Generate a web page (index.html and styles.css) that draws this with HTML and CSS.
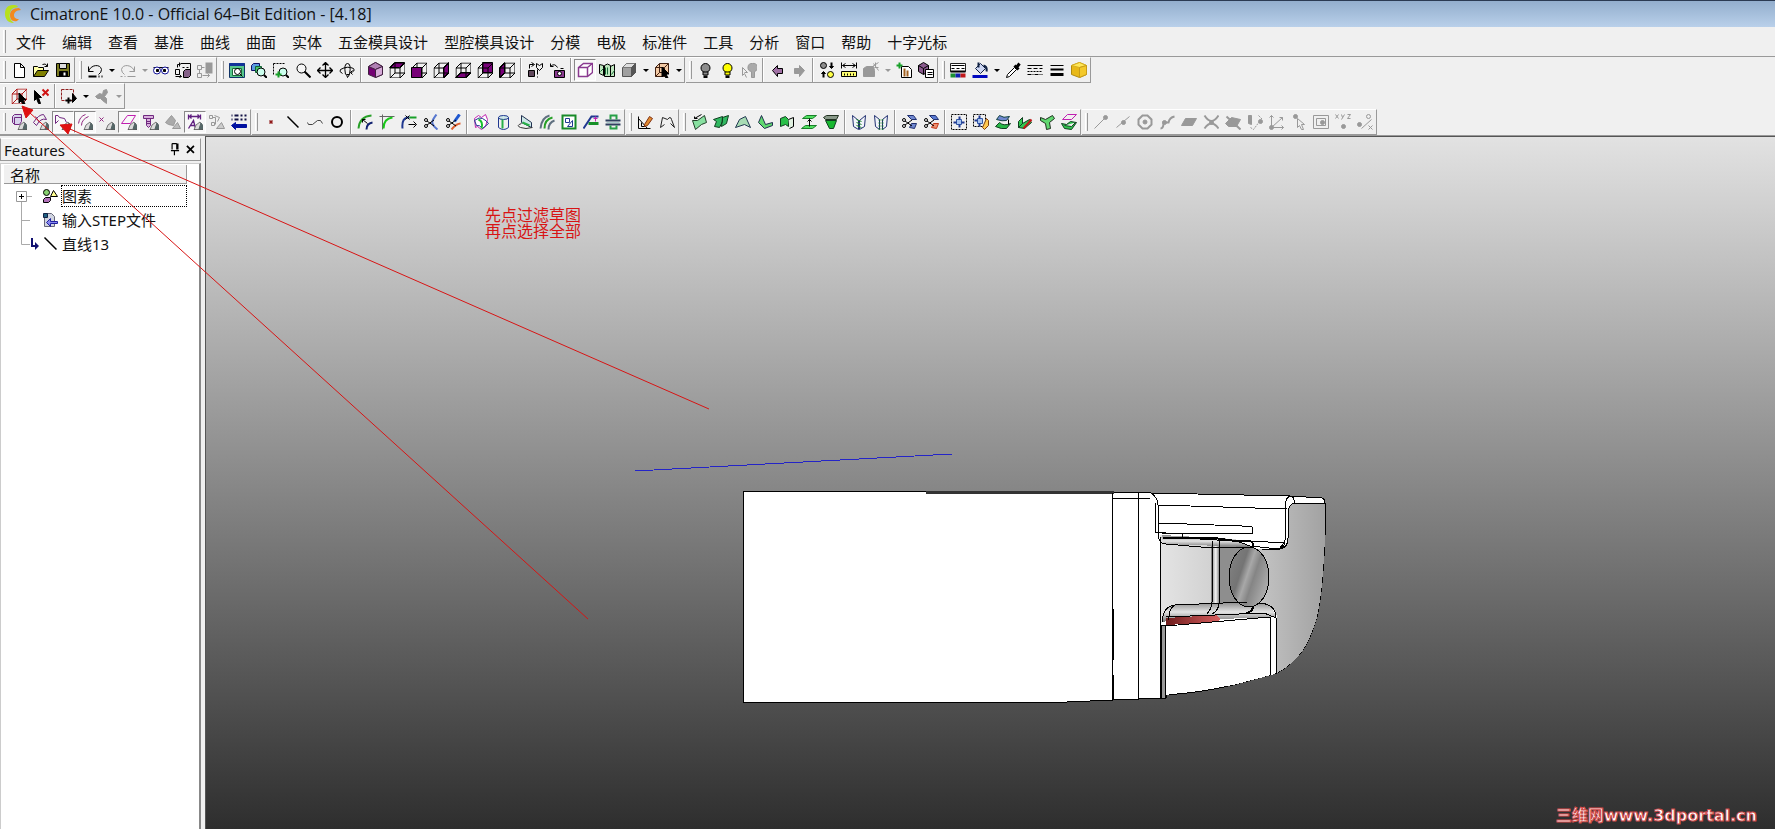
FILE: index.html
```html
<!DOCTYPE html>
<html lang="zh-CN">
<head>
    <meta charset="UTF-8">
    <meta name="viewport" content="width=device-width, initial-scale=1.0">
    <title>CimatronE 10.0</title>
    <link rel="stylesheet" href="styles.css">
</head>
<body>

<!-- shared icon parts -->
<svg class="defs" aria-hidden="true">
    <symbol id="wire" viewBox="-.5 -.5 16 16"><path d="M0 5h10v10H0zM5 0h10v10H5zM0 5l5-5M10 5l5-5M0 15l5-5M10 15l5-5"/></symbol>
    <symbol id="cone" viewBox="-.5 -.5 16 16"><path d="M6 15L8 10L12 7L15 11V15Z" fill="#dcdcdc" stroke="#777"/><path d="M11 14L13 8L15 11V14Z" fill="#566" stroke="#566"/><path d="M6 15H15" stroke="#333"/></symbol>
    <symbol id="pick" viewBox="-.5 -.5 16 16"><path d="M7 4V14L9 12L11 15L13 15L11 11H14Z" fill="#000"/></symbol>
    <symbol id="lens" viewBox="-.5 -.5 16 16"><circle cx="9" cy="9" r="4" fill="#cfe" /><path d="M12 12l3 3" stroke-width="2"/></symbol>
    <symbol id="scis" viewBox="-.5 -.5 16 16"><circle cx="2" cy="5" r="1.5"/><circle cx="2" cy="11" r="1.5"/><path d="M3 6L10 11M3 10L10 5"/></symbol>
    <symbol id="bulb" viewBox="-.5 -.5 16 16"><circle cx="7.500" cy="5" r="4.500"/><path d="M5 9H10V12H5Z"/><path d="M6 13H9V15H6Z" fill="#111"/></symbol>
</svg>

<div class="app">
    <header class="titlebar">
        <svg class="logo" viewBox="0 0 18 20"><path d="M9 1C3 1 1 5 1 10s3 9 9 9c-4-3-5-6-4-10s2-5 8-6C13 1 11 1 9 1z" fill="#b7e01c"/><path d="M15 4C9 4 6 7 6 11s2 7 7 6l2-2c-4 0-5-2-5-4s2-5 7-5z" fill="#f28a1e"/></svg>
        <span>CimatronE 10.0 - Official 64–Bit Edition - [4.18]</span>
    </header>

    <nav class="menubar">
        <span class="grip"></span>
        <button>文件</button><button>编辑</button><button>查看</button><button>基准</button><button>曲线</button><button>曲面</button><button>实体</button><button>五金模具设计</button><button>型腔模具设计</button><button>分模</button><button>电极</button><button>标准件</button><button>工具</button><button>分析</button><button>窗口</button><button>帮助</button><button>十字光标</button>
    </nav>

    <div class="dock">
        <!-- file -->
        <div class="toolbar">
            <span class="grip"></span>
            <button aria-label="新建"><svg viewBox="-.5 -.5 16 16"><path d="M3 1H9L13 5V15H3ZM9 1V5H13" fill="#fff"/></svg></button>
            <button aria-label="打开"><svg viewBox="-.5 -.5 16 16"><path d="M0 14V4H4L5 5H10V8" fill="#ffffa8"/><path d="M0 14L4 8H15L11 14Z" fill="#808000"/><path d="M9 2Q12 0 14 4M14 1V4H11"/></svg></button>
            <button aria-label="保存"><svg viewBox="-.5 -.5 16 16"><path d="M1 1H14V14H1Z" fill="#7a7a20"/><path d="M4 1H11V6H4Z" fill="#ddd"/><path d="M4 9H12V14H4Z" fill="#000"/><path d="M9 10V13" stroke="#fff" stroke-width="2"/></svg></button>
        </div>
        <!-- edit -->
        <div class="toolbar">
            <span class="grip"></span>
            <button aria-label="撤销"><svg viewBox="-.5 -.5 16 16"><path d="M1 4V9H6M1 9C3 2 13 1 14 7Q14 10 11 12"/><path d="M1 14H9M11 14H12M14 14H15" stroke-width="2"/></svg></button>
            <button class="arrow" aria-label="撤销列表"></button>
            <button class="off" aria-label="重做"><svg viewBox="-.5 -.5 16 16"><path d="M14 4V9H9M14 9C12 2 2 1 1 7Q1 10 4 12M0 14H2M4 14H5M7 14H15"/></svg></button>
            <button class="arrow off" aria-label="重做列表"></button>
            <button aria-label="查找"><svg viewBox="-.5 -.5 16 16"><path d="M0 5H15"/><circle cx="3.500" cy="8" r="3.500" fill="#fff" stroke="#119"/><circle cx="11.500" cy="8" r="3.500" fill="#fff" stroke="#119"/><path d="M3 7H5V9H3ZM10 7H12V9H10Z" fill="#000"/></svg></button>
            <button aria-label="替换"><svg viewBox="-.5 -.5 16 16"><path d="M5 1H15V9M0 7H4V12H0ZM2 5V2H5M4 0V4M0 14H6M4 12L6 14L4 15M7 5H9M11 5H13"/><path d="M8 9L10 7H15V13L13 15H8Z" fill="#846088"/></svg></button>
            <button class="off" aria-label="删除"><svg viewBox="-.5 -.5 16 16"><path d="M0 3H4V7H0ZM0 11H4V15H0ZM2 7V11M4 5H7M5 13H12M10 11L12 13L10 15"/><path d="M8 1H15M9 3H14V10H9Z" fill="#999" stroke-width="2"/></svg></button>
        </div>
        <!-- view -->
        <div class="toolbar">
            <span class="grip"></span>
            <button aria-label="全部显示"><svg viewBox="-.5 -.5 16 16"><path d="M0 1H15V15H0Z" fill="#57c78c" stroke="#136"/><path d="M0 2H15" stroke="#139" stroke-width="3"/><path d="M3 6H12V13H3Z" fill="#fff" stroke="#196b39"/><circle cx="8" cy="9" r="3"/><path d="M10 11L13 14"/></svg></button>
            <button aria-label="缩放选择"><svg viewBox="-.5 -.5 16 16"><path d="M0 3L2 1H8V6L6 8H0Z" fill="#5b9be2" stroke="#116"/><path d="M4 4H10V10H4Z" fill="#46c46c" stroke="#163"/><use href="#lens"/></svg></button>
            <button aria-label="窗口缩放"><svg viewBox="-.5 -.5 16 16"><path d="M0 1H12M0 1V12" stroke-dasharray="2 1"/><use href="#lens"/><path d="M5 9V15M2 12H8" stroke="#18a028" stroke-width="2"/></svg></button>
            <button aria-label="缩放"><svg viewBox="-.5 -.5 16 16"><circle cx="6" cy="6" r="4.500" fill="#f6f6f6"/><path d="M9 9L15 15" stroke-width="2"/></svg></button>
            <button aria-label="平移"><svg viewBox="-.5 -.5 16 16"><path d="M0 8H15M8 0V15M5 3L8 0L11 3M5 12L8 15L11 12M3 5L0 8L3 11M12 5L15 8L12 11" stroke-width="1.300"/></svg></button>
            <button aria-label="旋转"><svg viewBox="-.5 -.5 16 16"><path d="M6 12Q4 1 8 1Q12 1 10 12M8 15L7 12H10ZM3 11Q-1 9 1 7Q8 3 14 6Q16 9 11 10L13 8M11 10L13 12"/></svg></button>
            <span class="sep"></span>
            <button aria-label="轴测"><svg viewBox="-.5 -.5 16 16"><path d="M1 4L8 0L15 4V12L8 15L1 12Z" fill="#730073" stroke="#402040"/><path d="M1 4L8 0L15 4L8 7Z" fill="#b080b4" stroke="#402040"/><path d="M8 7L15 4V12L8 15Z" fill="#d6aad8" stroke="#402040"/></svg></button>
            <button aria-label="俯视"><svg viewBox="-.5 -.5 16 16"><path d="M0 5L5 0H15L10 5Z" fill="#780078"/><use href="#wire"/></svg></button>
            <button aria-label="前视"><svg viewBox="-.5 -.5 16 16"><use href="#wire"/><path d="M0 5H10V15H0Z" fill="#780078"/></svg></button>
            <button aria-label="右视"><svg viewBox="-.5 -.5 16 16"><path d="M10 5L15 0V10L10 15Z" fill="#780078"/><use href="#wire"/></svg></button>
            <button aria-label="仰视"><svg viewBox="-.5 -.5 16 16"><path d="M0 15L5 10H15L10 15Z" fill="#780078"/><use href="#wire"/></svg></button>
            <button aria-label="后视"><svg viewBox="-.5 -.5 16 16"><path d="M5 0H15V10H5Z" fill="#780078"/><use href="#wire"/></svg></button>
            <button aria-label="左视"><svg viewBox="-.5 -.5 16 16"><path d="M0 5L5 0V10L0 15Z" fill="#780078"/><use href="#wire"/></svg></button>
            <span class="sep"></span>
            <button aria-label="锁定视图"><svg viewBox="-.5 -.5 16 16"><path d="M1 8H7V14H1Z" fill="#60485c"/><path d="M2 6V2H6M4 0L7 2L4 4M9 1L12 3L15 1V5L12 8L9 5ZM10 7V12M10 14V15"/></svg></button>
            <button aria-label="拍照"><svg viewBox="-.5 -.5 16 16"><path d="M5 8H15V15H5Z" fill="#8a3a90"/><circle cx="10" cy="11" r="2" fill="#fff"/><path d="M1 1V4H4M1 4Q5 0 8 5M11 6H14"/></svg></button>
            <span class="sep"></span>
            <button class="on" aria-label="线框"><svg viewBox="-.5 -.5 16 16"><path d="M1 5L6 1H15V10L10 14H1ZM1 5H10V14M10 5L15 1" fill="#fff" stroke="#8a3a90" stroke-width="1.500"/></svg></button>
            <button aria-label="隐藏线"><svg viewBox="-.5 -.5 16 16"><path d="M0 2L4 3V13L0 11ZM5 3Q8 0 11 3V14H5ZM11 4L15 2V14H11Z" fill="#bfe8bf"/><path d="M1 9L4 6M6 12V5M8 12V5M12 12L15 8" stroke="#196b39"/></svg></button>
            <button aria-label="着色"><svg viewBox="-.5 -.5 16 16"><path d="M1 5L5 1H14V10L10 14H1Z" fill="#a0a0a0" stroke="#555"/><path d="M1 5L5 1H14L10 5Z" fill="#ddd" stroke="#777"/><path d="M10 5L14 1V10L10 14Z" fill="#555" stroke="#555"/></svg></button>
            <button class="arrow" aria-label="着色列表"></button>
            <button aria-label="选择显示"><svg viewBox="-.5 -.5 16 16"><path d="M1 5L5 1H14V10L10 14H1Z" fill="#f2c9a4" stroke="#402010"/><path d="M1 5H10V14M10 5L14 1M5 1V10H14M5 10L1 14" stroke="#402010"/><use href="#pick"/></svg></button>
            <button class="arrow" aria-label="显示列表"></button>
        </div>
        <!-- hide / show -->
        <div class="toolbar">
            <span class="grip"></span>
            <button aria-label="隐藏"><svg viewBox="-.5 -.5 16 16"><g fill="#8c8c8c"><use href="#bulb"/></g></svg></button>
            <button aria-label="显示"><svg viewBox="-.5 -.5 16 16"><g fill="#ff0"><use href="#bulb"/></g></svg></button>
            <button class="off" aria-label="切换显示"><svg viewBox="-.5 -.5 16 16"><path d="M1 5V13L3 11L5 15M1 5L6 10H3"/><path d="M11 1a4 4 0 0 1 2 8V15H10V9A4 4 0 0 1 11 1Z" fill="#aaa"/></svg></button>
            <span class="sep"></span>
            <button aria-label="后退"><svg viewBox="-.5 -.5 16 16"><path d="M3 8L8 3V6H13V11H8V14Z" fill="#a070a4"/></svg></button>
            <button class="off" aria-label="前进"><svg viewBox="-.5 -.5 16 16"><path d="M13 8L8 3V6H3V11H8V14Z" fill="#999"/></svg></button>
            <span class="sep"></span>
            <button aria-label="交换"><svg viewBox="-.5 -.5 16 16"><circle cx="4" cy="3" r="3" fill="#8c8c8c"/><circle cx="11" cy="12" r="3" fill="#ff4"/><path d="M12 0V4M4 15V11" stroke-width="2"/><path d="M10 4H14L12 6ZM2 11H6L4 9Z" fill="#000"/></svg></button>
            <button aria-label="测量"><svg viewBox="-.5 -.5 16 16"><path d="M0 0V6M15 0V6M1 3H14M4 1L1 3L4 5M11 1L14 3L11 5"/><path d="M0 9H15V14H0Z" fill="#ffff70"/><path d="M3 11V13M6 11V13M9 11V13M12 11V13"/></svg></button>
            <button class="off" aria-label="爆炸"><svg viewBox="-.5 -.5 16 16"><path d="M0 6L3 4H10L11 8V14H0Z" fill="#999"/><path d="M9 4L15 0M11 5H15M10 1L15 8M12 0V4" /></svg></button>
            <button class="arrow off" aria-label="爆炸列表"></button>
            <button aria-label="添加工具"><svg viewBox="-.5 -.5 16 16"><path d="M5 4H12L15 7V15H5Z" fill="#fff"/><path d="M8 6V14M11 8V14" stroke="#a06020" stroke-width="2"/><path d="M3 0V6M0 3H6" stroke="#18a028" stroke-width="2"/></svg></button>
            <button aria-label="属性"><svg viewBox="-.5 -.5 16 16"><path d="M0 3L5 0L10 3V9L5 12L0 9Z" fill="#8a5a8e"/><path d="M0 3L5 6L10 3M5 6V12"/><path d="M7 7H15V15H7Z" fill="#fff"/><path d="M9 10H14M9 12H14"/></svg></button>
        </div>
        <!-- attributes -->
        <div class="toolbar">
            <span class="grip"></span>
            <button aria-label="层"><svg viewBox="-.5 -.5 16 16"><path d="M0 1H15V9H0Z" fill="#fff" stroke="#222"/><path d="M1 3H14M1 6H4M6 6H9M11 6H14"/><path d="M0 9H15" stroke-width="2"/><path d="M0 13H5" stroke="#1a9030" stroke-width="4"/><path d="M5 13H10" stroke="#1020b0" stroke-width="4"/><path d="M10 13H15" stroke="#c01818" stroke-width="4"/></svg></button>
            <button aria-label="颜色"><svg viewBox="-.5 -.5 16 16"><path d="M3 6L8 1L13 6L8 11Z" fill="#cdd6f2" stroke="#124"/><path d="M11 3Q15 4 14 9M6 0V5" stroke="#124" stroke-width="2"/><path d="M0 14H15" stroke="#0008c0" stroke-width="3"/></svg></button>
            <button class="arrow" aria-label="颜色列表"></button>
            <button aria-label="吸管"><svg viewBox="-.5 -.5 16 16"><path d="M1 15L2 12L9 5L11 7L4 14Z" fill="#fff"/><path d="M9 3L13 7M11 5L14 1" stroke-width="3"/></svg></button>
            <button aria-label="线型"><svg viewBox="-.5 -.5 16 16"><path d="M0 3H15"/><path d="M0 6H15" stroke-dasharray="4 2"/><path d="M0 9H15" stroke-dasharray="2 1"/><path d="M0 12H15" stroke-dasharray="4 1 1 1"/></svg></button>
            <button aria-label="线宽"><svg viewBox="-.5 -.5 16 16"><path d="M1 3H14"/><path d="M1 7H14" stroke-width="2"/><path d="M1 12H14" stroke-width="3"/></svg></button>
            <button aria-label="材质"><svg viewBox="-.5 -.5 16 16"><path d="M0 3L8 0L15 3V12L8 15L0 12Z" fill="#e8b818" stroke="#b08a10"/><path d="M0 3L8 0L15 3L8 5Z" fill="#ffe75a" stroke="#d8b020"/><path d="M8 5L15 3V12L8 15Z" fill="#f4c92a" stroke="#c89c18"/></svg></button>
        </div>
    </div>

    <div class="dock">
        <!-- selection -->
        <div class="toolbar">
            <span class="grip"></span>
            <button aria-label="选择全部"><svg viewBox="-.5 -.5 16 16"><g stroke="#b01818"><use href="#wire"/></g><use href="#pick"/></svg></button>
            <button aria-label="取消选择"><svg viewBox="-.5 -.5 16 16"><path d="M1 2V12L3 10L5 15H7L5 9H8Z" fill="#000"/><path d="M9 1L15 7M15 1L9 7" stroke="#d01414" stroke-width="2"/></svg></button>
            <span class="sep"></span>
            <button aria-label="框选"><svg viewBox="-.5 -.5 16 16"><path d="M0 1H12V12H0Z" stroke="#902020" stroke-dasharray="3 1"/><path d="M7 9V15M4 12H10" stroke-width="2"/><path d="M11 5V14L15 10Z" fill="#000"/></svg></button>
            <button class="arrow" aria-label="框选列表"></button>
            <button class="off" aria-label="过滤器"><svg viewBox="-.5 -.5 16 16"><path d="M1 8L5 5L8 6L9 2L12 1L13 4L10 8L12 10V15L8 12L6 10L3 10Z" fill="#999"/></svg></button>
            <button class="arrow off" aria-label="过滤列表"></button>
        </div>
    </div>

    <div class="dock last">
        <!-- filters -->
        <div class="toolbar">
            <span class="grip"></span>
            <button aria-label="过滤实体"><svg viewBox="-.5 -.5 16 16"><path d="M1 2L3 0H10V7L8 10H3L1 8ZM3 3H10M3 3V10" fill="#d8d4ec" stroke="#702880"/><use href="#cone"/></svg></button>
            <button aria-label="过滤曲面"><svg viewBox="-.5 -.5 16 16"><path d="M0 8Q5 0 10 0L13 5Q7 3 3 11ZM2 2L6 8" stroke="#702880"/><use href="#cone"/></svg></button>
            <button class="on" aria-label="过滤草图"><svg viewBox="-.5 -.5 16 16"><path d="M0 9V1Q3 0 4 3L9 4L11 8M0 9L3 6" stroke="#702880"/><use href="#cone"/></svg></button>
            <button class="on" aria-label="过滤曲线"><svg viewBox="-.5 -.5 16 16"><path d="M1 9Q2 2 8 0M4 11Q4 5 11 2" stroke="#902880"/><use href="#cone"/></svg></button>
            <button aria-label="过滤点"><svg viewBox="-.5 -.5 16 16"><path d="M0 3L4 7M4 3L0 7" stroke="#902880"/><use href="#cone"/></svg></button>
            <button class="on" aria-label="过滤平面"><svg viewBox="-.5 -.5 16 16"><path d="M0 9L6 1H14L9 9Z" stroke="#c020b0"/><use href="#cone"/></svg></button>
            <button aria-label="过滤特征"><svg viewBox="-.5 -.5 16 16"><path d="M0 1H10V4H0ZM3 4V11L5 13L7 11V4M3 7H7M3 9H7" fill="#d8b0dc" stroke="#702880"/><use href="#cone"/></svg></button>
            <button class="off" aria-label="过滤网格"><svg viewBox="-.5 -.5 16 16"><path d="M0 8L6 1L10 6L8 11L3 10Z" fill="#aaa"/><path d="M7 14L12 8L15 14Z" fill="#bbb"/></svg></button>
            <button class="on" aria-label="过滤标注"><svg viewBox="-.5 -.5 16 16"><path d="M1 0V5M13 0V5M2 2H12M4 0L2 2L4 4M10 0L12 2L10 4M1 14L6 6L8 14M3 11H8" stroke="#602080" stroke-width="1.300"/><use href="#cone"/></svg></button>
            <button class="off" aria-label="过滤其他"><svg viewBox="-.5 -.5 16 16"><path d="M0 1H3V4H0ZM3 3H6V10M5 1L10 3L8 7M2 8H5V11H2Z"/><path d="M7 14L12 8L15 14Z" fill="#ccc"/></svg></button>
            <button aria-label="过滤反选"><svg viewBox="-.5 -.5 16 16"><path d="M0 1H1M3 1H7M9 1H11M13 1H15M0 5H1M3 5H7M9 5H11M13 5H15" stroke="#114" stroke-width="2"/><path d="M0 11L4 8V10H15V13H4V15Z" fill="#0010a0" stroke="#0010a0"/></svg></button>
        </div>
        <!-- curves -->
        <div class="toolbar">
            <span class="grip"></span>
            <button aria-label="点"><svg viewBox="-.5 -.5 16 16"><path d="M6 6L9 9M9 6L6 9" stroke="#901818" stroke-width="1.500"/></svg></button>
            <button aria-label="直线"><svg viewBox="-.5 -.5 16 16"><path d="M2 2L13 13" stroke-width="1.500"/></svg></button>
            <button aria-label="样条"><svg viewBox="-.5 -.5 16 16"><path d="M0 8L1 10H5L10 6H13L15 9" stroke="#444"/></svg></button>
            <button aria-label="圆"><svg viewBox="-.5 -.5 16 16"><circle cx="7.500" cy="7.500" r="5" stroke-width="2"/></svg></button>
            <span class="sep"></span>
            <button aria-label="偏移曲线"><svg viewBox="-.5 -.5 16 16"><path d="M1 14Q2 2 14 1" stroke="#28a028" stroke-width="2"/><path d="M9 15Q9 9 15 8" stroke="#102070" stroke-width="2"/><path d="M10 9L5 5M5 8V5H8"/></svg></button>
            <button aria-label="倒圆曲线"><svg viewBox="-.5 -.5 16 16"><path d="M0 2H15M3 0V15" stroke="#666"/><path d="M4 14Q4 4 13 3" stroke="#18c818" stroke-width="2"/></svg></button>
            <button aria-label="延伸曲线"><svg viewBox="-.5 -.5 16 16"><path d="M1 14Q0 4 6 3H8" stroke="#203890" stroke-width="2"/><path d="M8 3H15" stroke="#18a028" stroke-width="2"/><path d="M4 1L8 5M8 1L4 5M7 10H14M12 7L15 10L12 13"/></svg></button>
            <button aria-label="修剪曲线"><svg viewBox="-.5 -.5 16 16"><path d="M13 0Q8 6 9 9T14 15" stroke="#5878d0" stroke-width="2"/><use href="#scis"/></svg></button>
            <button aria-label="分割曲线"><svg viewBox="-.5 -.5 16 16"><path d="M14 0L9 7" stroke="#2058d0" stroke-width="3"/><path d="M6 15Q11 9 15 9" stroke="#e06030" stroke-width="2"/><use href="#scis"/></svg></button>
            <span class="sep"></span>
            <button aria-label="面上曲线"><svg viewBox="-.5 -.5 16 16"><path d="M1 4L5 1L8 3L12 0L14 5L12 12L8 15L4 12L2 13Z" fill="#fff" stroke="#c020b0"/><path d="M1 6Q6 2 9 4Q13 6 15 9L9 14Q6 10 3 11Z" stroke="#203890"/><path d="M5 5Q10 7 8 14" stroke="#18c030" stroke-width="2"/></svg></button>
            <button aria-label="截面曲线"><svg viewBox="-.5 -.5 16 16"><ellipse cx="8" cy="3" rx="5" ry="2" fill="#cfe8e8" stroke="#203890"/><path d="M3 3V13Q8 17 13 13V3" stroke="#203890"/><path d="M7 5V14" stroke="#28b048" stroke-width="2"/></svg></button>
            <button aria-label="投影曲线"><svg viewBox="-.5 -.5 16 16"><path d="M4 1L14 8V13L4 8Z" fill="#cfe8e8" stroke="#203050"/><path d="M4 9Q-2 11 3 13T15 13" stroke="#333"/><path d="M5 8L12 11" stroke="#28b048" stroke-width="2"/></svg></button>
            <button aria-label="中间曲线"><svg viewBox="-.5 -.5 16 16"><path d="M1 14Q2 3 10 1M9 15Q9 8 15 6" stroke="#607080" stroke-width="2"/><path d="M5 14Q5 5 13 3" stroke="#28a028" stroke-width="2"/></svg></button>
            <button aria-label="轮廓曲线"><svg viewBox="-.5 -.5 16 16"><path d="M1 1H14V14H1Z" fill="#fff" stroke="#188a28" stroke-width="2"/><path d="M4 4H8V8H4ZM11 6V12H6Z" stroke="#203890"/></svg></button>
            <button aria-label="组合曲线"><svg viewBox="-.5 -.5 16 16"><path d="M5 9H15" stroke="#189028" stroke-width="3"/><path d="M0 14L8 2H15" stroke="#203890" stroke-width="2"/><path d="M12 2V7M10 4H14" stroke="#c020b0"/></svg></button>
            <button aria-label="连接曲线"><svg viewBox="-.5 -.5 16 16"><path d="M0 6H15M0 10H15" stroke="#304060" stroke-width="2"/><path d="M5 5V1H11V5M5 11V14H11V11" stroke="#28a048" stroke-width="2"/><path d="M1 8H14" stroke="#acc"/></svg></button>
        </div>
        <!-- sketch -->
        <div class="toolbar">
            <span class="grip"></span>
            <button aria-label="草图"><svg viewBox="-.5 -.5 16 16"><path d="M1 2V14H13M1 4L10 14M4 8V12H8"/><path d="M7 10L12 2L15 4L10 11L7 12Z" fill="#e08a30" stroke="#803010"/></svg></button>
            <button aria-label="组合"><svg viewBox="-.5 -.5 16 16"><path d="M1 13L3 3L8 5Q11 1 12 5L15 13L11 9M1 13L5 10" stroke="#222"/></svg></button>
        </div>
        <!-- surfaces -->
        <div class="toolbar">
            <span class="grip"></span>
            <button aria-label="拉伸面"><svg viewBox="-.5 -.5 16 16"><path d="M1 6L6 6L13 1L15 8L10 10L4 15Z" fill="#88e0a0" stroke="#204028"/><path d="M3 4L10 0M3 2V4H6"/></svg></button>
            <button aria-label="导动面"><svg viewBox="-.5 -.5 16 16"><path d="M0 5L9 2V7L6 13L1 12L3 7ZM9 3L15 1L13 9L8 12Z" fill="#30b860" stroke="#104020"/></svg></button>
            <button aria-label="混合面"><svg viewBox="-.5 -.5 16 16"><path d="M0 13L4 5L10 2L15 13L9 10Z" fill="#a8dcb4" stroke="#203850"/></svg></button>
            <button aria-label="边界面"><svg viewBox="-.5 -.5 16 16"><path d="M4 1L1 8L7 14L15 11V8L8 10Z" fill="#60d870" stroke="#203050"/></svg></button>
            <button aria-label="偏移面"><svg viewBox="-.5 -.5 16 16"><path d="M1 4L6 2L9 5V12L6 10L1 12Z" fill="#28c048" stroke="#104020"/><path d="M9 5L14 3V12L10 14" fill="#e0f0e0"/></svg></button>
            <button aria-label="平行面"><svg viewBox="-.5 -.5 16 16"><path d="M1 4L5 1H15L11 4Z" fill="#50e060" stroke="#188028"/><path d="M0 14L4 11H15L11 14Z" fill="#50e060" stroke="#188028"/><path d="M8 4V12M6 7L8 5L10 7"/></svg></button>
            <button aria-label="拔模面"><svg viewBox="-.5 -.5 16 16"><path d="M0 3L3 1H15L13 5H2Z" fill="#889888" stroke="#203020"/><path d="M2 6H13L10 14H6Z" fill="#18b830" stroke="#104020"/></svg></button>
            <span class="sep"></span>
            <button aria-label="缝合"><svg viewBox="-.5 -.5 16 16"><path d="M1 1L7 6V15L2 12ZM14 1L8 6V15L13 12Z" fill="#f2f4fa" stroke="#203070"/><path d="M5 5L10 7M5 8L10 10M5 11L10 13" stroke="#188028"/></svg></button>
            <button aria-label="拆开"><svg viewBox="-.5 -.5 16 16"><path d="M1 1L6 5V15L2 12ZM14 1L9 5V15L13 12Z" fill="#f2f4fa" stroke="#203070"/><path d="M6 5V15M9 5V15" stroke="#188028" stroke-width="2" stroke-dasharray="1 2"/></svg></button>
            <span class="sep"></span>
            <button aria-label="修剪面"><svg viewBox="-.5 -.5 16 16"><path d="M6 1H12L15 5H10ZM8 13L10 9H15L13 14Z" fill="#7088d0" stroke="#203070"/><use href="#scis"/></svg></button>
            <button aria-label="分割面"><svg viewBox="-.5 -.5 16 16"><path d="M6 1H12L15 5H10Z" fill="#5878d0" stroke="#203070"/><path d="M8 13L10 9H15L13 14Z" fill="#f09070" stroke="#c03818"/><use href="#scis"/></svg></button>
            <span class="sep"></span>
            <button aria-label="延伸面"><svg viewBox="-.5 -.5 16 16"><path d="M0 0H15V15H0Z" stroke-dasharray="2 1"/><path d="M5 5H10V10H5Z" fill="#a8c4f0" stroke="#3058a8"/><path d="M8 2V5M8 10V13M2 8H5M10 8H13" stroke="#203890" stroke-width="2"/></svg></button>
            <button aria-label="编辑延伸"><svg viewBox="-.5 -.5 16 16"><path d="M0 0H12V12H0Z" stroke-dasharray="2 1"/><path d="M4 4H9V9H4Z" fill="#a8c4f0" stroke="#3058a8"/><path d="M6 1V4M6 9V12M1 6H4" stroke="#203890" stroke-width="2"/><path d="M9 13L13 4L15 6V11L11 15Z" fill="#ffc850" stroke="#804010"/></svg></button>
            <button aria-label="变形面"><svg viewBox="-.5 -.5 16 16"><path d="M1 5L4 1Q8 4 14 2L11 6Q7 7 1 5Z" fill="#7088d0" stroke="#104040"/><path d="M0 12L4 8Q8 12 15 9L11 14Q6 15 0 12Z" fill="#28b848" stroke="#104020"/><path d="M13 5V10"/></svg></button>
            <button aria-label="修改面"><svg viewBox="-.5 -.5 16 16"><path d="M1 7L5 3V9L1 13ZM5 9L12 5L14 8L7 14L1 13Z" fill="#30c850" stroke="#104020"/><path d="M6 14L14 5" stroke="#c01818" stroke-width="2"/></svg></button>
            <button aria-label="倒圆面"><svg viewBox="-.5 -.5 16 16"><path d="M1 3L6 5L13 1L15 4L10 8L11 14L7 15L6 9L1 6Z" fill="#60d870" stroke="#203020"/></svg></button>
            <button aria-label="分模面"><svg viewBox="-.5 -.5 16 16"><path d="M1 5L6 0H15L10 5Z" stroke="#c020b0"/><path d="M0 9L5 10L9 7L15 8L10 15L3 14ZM3 11L10 12L14 8" fill="#30c850" stroke="#104020"/></svg></button>
        </div>
        <!-- snap points -->
        <div class="toolbar">
            <span class="grip"></span>
            <button class="off" aria-label="端点"><svg viewBox="-.5 -.5 16 16"><path d="M1 14L12 3"/><circle cx="12" cy="3" r="2" fill="#999"/></svg></button>
            <button class="off" aria-label="中点"><svg viewBox="-.5 -.5 16 16"><path d="M1 13L14 2"/><circle cx="8" cy="8" r="2" fill="#999"/></svg></button>
            <button class="off" aria-label="圆心"><svg viewBox="-.5 -.5 16 16"><path d="M5 1H10L14 5V10L10 14H5L1 10V5Z" stroke-width="2"/><circle cx="7.500" cy="7.500" r="2" fill="#999"/></svg></button>
            <button class="off" aria-label="最近点"><svg viewBox="-.5 -.5 16 16"><path d="M1 14Q4 14 4 8L9 8Q10 3 15 2" stroke-width="2"/><circle cx="5" cy="8" r="2" fill="#999"/></svg></button>
            <button class="off" aria-label="平面点"><svg viewBox="-.5 -.5 16 16"><path d="M0 11L4 4H15L11 11Z" fill="#999"/></svg></button>
            <button class="off" aria-label="交点"><svg viewBox="-.5 -.5 16 16"><path d="M1 1Q8 12 15 1M1 14Q8 4 15 14" stroke-width="2"/><circle cx="8" cy="8" r="2" fill="#999"/></svg></button>
            <button class="off" aria-label="面交点"><svg viewBox="-.5 -.5 16 16"><path d="M0 9L6 3L15 5L11 12H3Z" fill="#999"/><path d="M1 2L15 15" stroke-width="2"/></svg></button>
            <button class="off" aria-label="垂足"><svg viewBox="-.5 -.5 16 16"><path d="M1 1H4V10L1 9Z" fill="#999"/><path d="M3 13L6 15L12 7M11 1L15 5" stroke-dasharray="2 1"/><circle cx="13" cy="7" r="2" fill="#999"/></svg></button>
            <button class="off" aria-label="坐标系原点"><svg viewBox="-.5 -.5 16 16"><path d="M2 1V13H14M2 13L13 3M0 3L2 1L4 3M12 11L14 13L12 15M10 3H13V6"/><circle cx="2" cy="13" r="2" fill="#999"/></svg></button>
            <button class="off" aria-label="拾取点"><svg viewBox="-.5 -.5 16 16"><circle cx="4" cy="2" r="2" fill="#999"/><path d="M6 4V13L8 11L10 15H12L10 10H13Z"/></svg></button>
            <button class="off" aria-label="屏幕点"><svg viewBox="-.5 -.5 16 16"><path d="M0 1H15V14H0ZM3 4H12V11H3Z"/><circle cx="9" cy="8" r="2" fill="#999"/></svg></button>
            <button class="off" aria-label="坐标点"><svg viewBox="-.5 -.5 16 16"><path d="M0 0L3 4M3 0L0 4M6 0L7 3M9 0L6 5M12 0H15L12 4H15"/><circle cx="8" cy="12" r="2" fill="#999"/></svg></button>
            <button class="off" aria-label="相对点"><svg viewBox="-.5 -.5 16 16"><circle cx="2" cy="10" r="2" fill="#999"/><circle cx="11" cy="2" r="2"/><path d="M4 14L14 5M11 11L15 15M15 11L11 15"/></svg></button>
        </div>
    </div>

    <main class="workspace">
        <aside class="sidebar">
            <div class="panel-head">
                <h2>Features</h2>
                <button aria-label="固定"><svg viewBox="-.5 -.5 10 12"><path d="M2 0V5M2 0H6M6 0V5M1 6H8M4 6V10M7 0V5"/></svg></button>
                <button aria-label="关闭"><svg viewBox="-.5 -.5 10 12"><path d="M1 2L7 8M7 2L1 8" stroke-width="1.500"/></svg></button>
            </div>
            <div class="tree">
                <div class="column">名称</div>
                <ul>
                    <li>
                        <svg class="branch" viewBox="0 0 24 24"><path d="M7.500 12V24" stroke="#aaa"/><path d="M12 12.500H18" stroke="#aaa"/><path d="M2.500 7.500H12.500V17.500H2.500Z" fill="#fff" stroke="#999"/><path d="M5 12.500H10M7.500 10V15"/></svg>
                        <svg class="icon" viewBox="-.5 -.5 16 16"><circle cx="4" cy="4" r="3" fill="#88d070"/><path d="M8 8L11 2L15 8Z" fill="#ffff90"/><path d="M1 11L3 9H8V12L6 14H1Z" fill="#b070b8"/></svg>
                        <span class="label selected">图素</span>
                    </li>
                    <li>
                        <svg class="branch" viewBox="0 0 24 24"><path d="M7.500 0V24M8 12.500H16" stroke="#aaa"/></svg>
                        <svg class="icon" viewBox="-.5 -.5 16 16"><path d="M2 1H9L12 4V14H2Z" fill="#d0d4e0" stroke="#667"/><path d="M1 1H5V5H1Z" fill="#206080" stroke="#124"/><path d="M4 10L8 6V9H15V11H8V14Z" fill="#88e" stroke="#2020a0"/></svg>
                        <span class="label">输入STEP文件</span>
                    </li>
                    <li>
                        <svg class="branch" viewBox="0 0 24 24"><path d="M7.500 0V12.500H16" stroke="#aaa"/><path d="M18 6V14H22" stroke="#101070" stroke-width="2"/><path d="M21 10L25 14L21 18Z" fill="#101070" stroke="none"/></svg>
                        <svg class="icon" viewBox="-.5 -.5 16 16"><path d="M2 1L14 13" stroke-width="1.500"/></svg>
                        <span class="label">直线13</span>
                    </li>
                </ul>
            </div>
        </aside>

        <section class="viewport">
            <svg class="scene" role="img" aria-label="三维模型">
                <defs>
                    <linearGradient id="wall"><stop offset="0" stop-color="#e4e4e4"/><stop offset="1" stop-color="#c4c4c4"/></linearGradient>
                    <linearGradient id="side"><stop offset="0" stop-color="#c8c8c8"/><stop offset="1" stop-color="#a2a2a2"/></linearGradient>
                    <linearGradient id="hole" x2="1" y2=".5"><stop offset="0" stop-color="#858585"/><stop offset=".4" stop-color="#747474"/><stop offset=".55" stop-color="#a8a8a8"/><stop offset=".7" stop-color="#858585"/><stop offset="1" stop-color="#a8a8a8"/></linearGradient>
                    <linearGradient id="round" x2="0" y2="1"><stop offset="0" stop-color="#8a8a8a"/><stop offset=".5" stop-color="#e4e4e4"/><stop offset="1" stop-color="#777"/></linearGradient>
                    <linearGradient id="fillet"><stop offset="0" stop-color="#777"/><stop offset=".6" stop-color="#f4f4f4"/><stop offset="1" stop-color="#888"/></linearGradient>
                    <linearGradient id="red"><stop offset="0" stop-color="#6e1c1c"/><stop offset="1" stop-color="#d86060"/></linearGradient>
                </defs>
                <g class="model" transform="translate(-206 -137)">
                    <path d="M635 471L952 454" stroke="#2424c8"/>
                    <path d="M743 491H926L1114 492L1151 493L1290 496L1322 498Q1325 499 1325 503V535Q1323 590 1317 617Q1310 640 1303 650Q1292 665 1277 673L1233 685Q1205 692 1167 695L1166 698L1113 700L1067 702H743Z" fill="#fff"/>
                    <path d="M926 492.500H1114" stroke="#333" stroke-width="3"/>
                    <!-- side wall -->
                    <path d="M1294 503L1325 503V535Q1323 590 1317 617Q1310 640 1303 650Q1292 665 1277 673V617Q1274 604 1257 603L1250 549H1280Q1288 548 1288 538V513Q1289 504 1294 503Z" fill="url(#side)" stroke="none"/>
                    <path d="M1325 503H1294"/>
                    <!-- pocket -->
                    <path d="M1160 535L1250 541V607L1165 618L1160 625Z" fill="url(#wall)" stroke="none"/>
                    <path d="M1219 542L1254 546V604L1217 614Z" fill="#8e8e8e" stroke="none"/>
                    <path d="M1211 542H1219V604L1211 604Z" fill="url(#fillet)" stroke="none"/>
                    <path d="M1162 535L1235 539L1250 547L1165 544Q1160 541 1162 535Z" fill="url(#round)" stroke="none"/>
                    <path d="M1163 622Q1163 606 1175 605L1247 602L1257 603Q1275 604 1275 617L1166 621Z" fill="url(#round)" stroke="none"/>
                    <path d="M1234 540L1284 543L1279 549L1250 546Z" fill="#fff"/>
                    <path d="M1158 533Q1158 544 1166 544L1212 548L1250 547M1262 549H1280Q1288 548 1288 538V513Q1289 504 1294 503M1165 537L1234 541L1254 542M1212 541V602Q1212 608 1207 614M1219 541V603Q1219 610 1212 614"/>
                    <path d="M1163 538H1215L1235 541M1252 541L1254 550M1246 613Q1254 612 1253 604" stroke-width="2"/>
                    <ellipse cx="1249" cy="577" rx="20" ry="30" fill="url(#hole)"/>
                    <!-- upper block -->
                    <path d="M1158 505L1287 509M1159 523L1242 526L1252 527V533H1162M1182 534V537M1151 493Q1158 498 1158 505V533M1155 503V532H1166M1290 496Q1285 498 1285 507V540Q1285 548 1278 549M1290 496Q1295 497 1294 503M1150 498H1112"/>
                    <!-- lower block -->
                    <path d="M1166 626L1270 617L1275 618V674L1233 685L1166 695Z" fill="#fff" stroke="none"/>
                    <path d="M1161 625H1165V698H1161Z" fill="#999"/>
                    <path d="M1166 618L1217 615Q1223 620 1217 622L1166 625Z" fill="url(#red)" stroke="none"/>
                    <path d="M1162 622Q1163 606 1175 605L1247 602M1169 620Q1168 609 1175 605M1166 617L1264 613L1276 618M1166 626L1270 617M1257 603Q1276 603 1276 618V673M1270 617V675"/>
                    <path d="M1112 493V700M1138 493V577L1139 699M1160 537V650"/>
                    <path d="M1113 609V660M1113 675V700M1161 650V698" stroke-width="2"/>
                </g>
            </svg>
            <p class="note">先点过滤草图<br>再点选择全部</p>
            <p class="watermark">三维网www.3dportal.cn</p>
        </section>
    </main>

    <!-- callout arrows -->
    <svg class="callouts" aria-hidden="true">
        <path d="M30 113L588 619M70 129L709 409"/>
        <path d="M22 106L33 110L26 118ZM60 125L72 124L68 134Z" fill="#e01010"/>
    </svg>
</div>

</body>
</html>
```
FILE: styles.css
```css
* {
    box-sizing: border-box;
}
body {
    margin: 0;
    background-color: #f0f0f0;
    color: #111;
    font-family: "Noto Sans", "Noto Sans CJK SC", sans-serif;
    font-size: 15px;
}
button {
    padding: 0;
    border: 0;
    background: none;
    color: inherit;
    font: inherit;
}
svg {
    display: block;
    fill: none;
    stroke: #000;
}
.defs {
    position: absolute;
    width: 0;
    height: 0;
}
.app {
    position: relative;
    display: flex;
    flex-direction: column;
    height: 100vh;
    overflow: hidden;
}

/* title and menu */
.titlebar {
    display: flex;
    align-items: center;
    gap: 8px;
    height: 27px;
    padding-left: 4px;
    border-top: 1px solid #2b3a52;
    background: linear-gradient(#93aecd, #b9d0ea);
    font-family: "Open Sans", sans-serif;
    font-size: 16px;
    line-height: 24px;
    white-space: nowrap;
}
.logo {
    width: 18px;
    height: 20px;
    stroke: none;
}
.grip {
    align-self: stretch;
    width: 3px;
    margin: 3px 2px 3px 3px;
    border-right: 1px solid #999;
    border-left: 1px solid #fff;
}
.menubar {
    display: flex;
    align-items: center;
    height: 30px;
    border-bottom: 1px solid #999;
    font-family: "Noto Sans CJK SC", sans-serif;
    line-height: 20px;
    white-space: nowrap;
}
.menubar button {
    padding: 0 8px;
}

/* toolbars */
.dock {
    display: flex;
    gap: 1px;
    height: 26px;
}
.dock.last {
    height: 27px;
    border-bottom: 1px solid #999;
}
.toolbar {
    display: flex;
    flex: none;
    align-items: center;
    border: 1px solid #999;
    border-top-color: #fff;
    border-left: 0;
}
.toolbar button {
    width: 22px;
    height: 22px;
    padding: 3px;
}
.toolbar svg {
    width: 16px;
    height: 16px;
}
.toolbar .on {
    border: 1px solid #fff;
    border-top-color: #888;
    border-left-color: #888;
    background-color: #f8f8f8;
    padding: 2px;
}
.toolbar .off svg {
    stroke: #999;
}
.toolbar .arrow {
    width: 11px;
    padding: 0;
}
.arrow::before {
    content: "";
    display: block;
    width: 0;
    margin: 0 auto;
    border: 3px solid transparent;
    border-top-color: #000;
    border-bottom: 0;
}
.arrow.off::before {
    border-top-color: #999;
}
.sep {
    align-self: stretch;
    width: 2px;
    margin: 0 2px;
    border-left: 1px solid #999;
    border-right: 1px solid #fff;
}

/* workspace */
.workspace {
    display: flex;
    flex: 1;
    gap: 4px;
    min-height: 0;
}
.sidebar {
    display: flex;
    flex-direction: column;
    gap: 2px;
    flex: 0 0 201px;
    padding-top: 2px;
}
.panel-head {
    display: flex;
    align-items: center;
    gap: 4px;
    height: 23px;
    padding: 0 3px 0 3px;
    border: 1px solid #999;
    border-top-color: #fff;
}
.panel-head h2 {
    flex: 1;
    margin: 0;
    font-size: 15px;
    font-weight: 400;
    line-height: 20px;
}
.panel-head svg {
    width: 12px;
    height: 14px;
}
.tree {
    flex: 1;
    padding: 1px 12px 0 3px;
    border-top: 1px solid #ccc;
    border-left: 1px solid #ccc;
    border-right: 2px solid #888;
    background-color: #fff;
}
.column {
    height: 19px;
    padding-left: 6px;
    border-right: 1px solid #999;
    border-bottom: 1px solid #999;
    background-color: #f0f0f0;
    line-height: 20px;
}
.tree ul {
    margin: 0;
    padding: 0;
    list-style: none;
}
.tree li {
    display: flex;
    align-items: center;
    height: 24px;
    padding-left: 10px;
}
.branch {
    width: 24px;
    height: 24px;
    overflow: visible;
}
.icon {
    width: 16px;
    height: 16px;
    margin: 0 3px 0 4px;
}
.label {
    flex: 1;
    border: 1px solid transparent;
    line-height: 20px;
    white-space: nowrap;
}
.label.selected {
    border: 1px dotted #000;
}
.viewport {
    position: relative;
    flex: 1;
    border-top: 1px solid #555;
    border-left: 1px solid #555;
    background: linear-gradient(#e2e2e2, #2e2e2e);
    overflow: hidden;
}
.scene {
    width: 100%;
    height: 100%;
}
.model {
    shape-rendering: crispEdges;
}
.note {
    position: absolute;
    top: 69px;
    left: 279px;
    margin: 0;
    color: #d81414;
    font-family: "Noto Sans CJK SC", sans-serif;
    font-size: 16px;
    line-height: 16px;
}
.watermark {
    position: absolute;
    right: 18px;
    bottom: 3px;
    margin: 0;
    color: #fff;
    font-family: "DejaVu Sans", "Noto Sans CJK SC", sans-serif;
    font-size: 16px;
    font-weight: 700;
    line-height: 20px;
    -webkit-text-stroke: 1px #d04848;
}
.callouts {
    position: absolute;
    top: 0;
    left: 0;
    width: 100%;
    height: 100%;
    stroke: #d81414;
    pointer-events: none;
}
```
